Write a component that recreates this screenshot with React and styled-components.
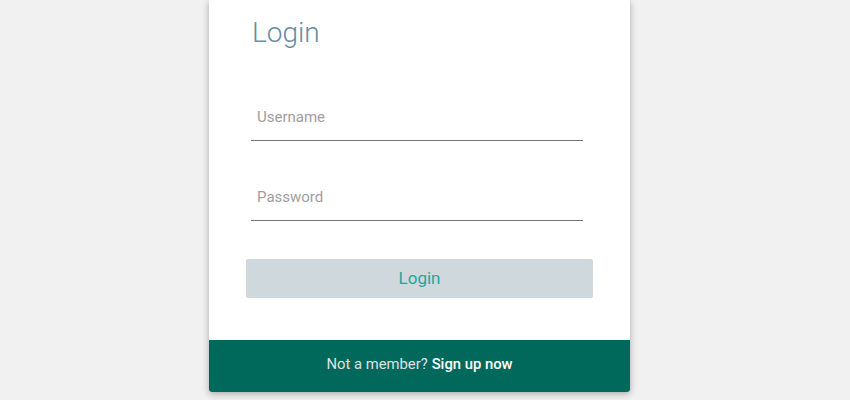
import React from "react";
import styled, { createGlobalStyle } from "styled-components";

const GlobalStyle = createGlobalStyle`
  html, body {
    margin: 0;
    padding: 0;
    background: #f1f1f1;
    font-family: Roboto, "Liberation Sans", Arial, sans-serif;
  }
`;

const App = () => {
  return (
    <Page>
      <GlobalStyle />
      <Card>
        <Form onSubmit={(e) => e.preventDefault()}>
          <Title>Login</Title>
          <Fields>
            <Input type="text" placeholder="Username" />
            <Input type="password" placeholder="Password" />
          </Fields>
          <Submit type="submit">Login</Submit>
        </Form>
        <Footer>
          Not a member? <SignUp href="#signup">Sign up now</SignUp>
        </Footer>
      </Card>
    </Page>
  );
};

const Page = styled.div`
  width: 850px;
  height: 400px;
  display: flex;
  align-items: flex-start;
  padding-left: 209px;
  box-sizing: border-box;
  overflow: hidden;
`;

const Card = styled.div`
  width: 421px;
  background: #ffffff;
  border-radius: 0 0 3px 3px;
  box-shadow: 0 2px 7px rgba(0, 0, 0, 0.3);
  overflow: hidden;
`;

const Form = styled.form`
  display: flex;
  flex-direction: column;
  padding: 16px 37px 42px;
`;

const Title = styled.h1`
  margin: 0 0 0 6px;
  font-size: 28px;
  font-weight: 300;
  line-height: 1.2;
  color: #6a8ba0;
`;

const Fields = styled.div`
  display: flex;
  flex-direction: column;
  gap: 45px;
  margin: 56px 10px 38px 5px;
`;

const Input = styled.input`
  height: 20px;
  padding: 1px 6px 13px;
  border: none;
  border-bottom: 1px solid #757575;
  outline: none;
  background: transparent;
  font-family: Roboto, "Liberation Sans", Arial, sans-serif;
  font-size: 15px;
  color: #444;
  &::placeholder {
    color: #9e9e9e;
  }
`;

const Submit = styled.button`
  height: 39px;
  border: none;
  border-radius: 2px;
  background: #cfd8dc;
  color: #26a69a;
  font-family: Roboto, "Liberation Sans", Arial, sans-serif;
  font-size: 17px;
  font-weight: 400;
  cursor: pointer;
`;

const Footer = styled.div`
  height: 52px;
  display: flex;
  align-items: center;
  justify-content: center;
  gap: 4px;
  padding-bottom: 4px;
  box-sizing: border-box;
  background: #00695c;
  color: #e0e0e0;
  font-size: 14.8px;
`;

const SignUp = styled.a`
  color: #ffffff;
  font-weight: 500;
  text-decoration: none;
`;

export default App;
